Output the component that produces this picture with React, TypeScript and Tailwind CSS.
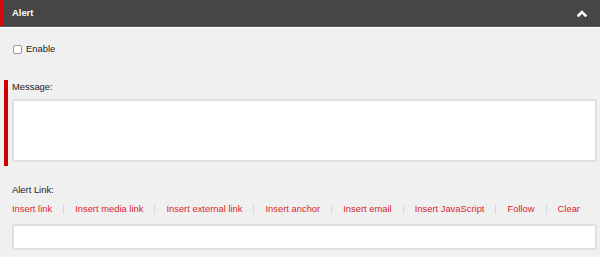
import React from "react";

const links = [
  "Insert link",
  "Insert media link",
  "Insert external link",
  "Insert anchor",
  "Insert email",
  "Insert JavaScript",
  "Follow",
  "Clear",
];

export default function App() {
  return (
    <div className="w-[600px] h-[257px] overflow-hidden bg-[#f0f0f0] font-['Liberation_Sans',Arial,sans-serif] text-[9.4px] text-[#222]">
      <div className="flex h-[26px] bg-[#464646]">
        <div className="w-[3px] bg-[#d10a0a]" />
        <div className="flex flex-1 items-center justify-between pl-[9px] pr-[13px]">
          <span className="font-bold text-white leading-[12px]">Alert</span>
          <svg width="10" height="8" viewBox="0 0 10 8" className="mb-[1px]">
            <polyline
              points="1.5,6.5 5,3 8.5,6.5"
              fill="none"
              stroke="#ffffff"
              strokeWidth="2.6"
              strokeLinecap="square"
            />
          </svg>
        </div>
      </div>
      <div className="h-px bg-[#5c5c5c]" />
      <div className="h-px bg-white" />

      <div className="mt-[16px] flex h-[10px] items-center pl-[13px]">
        <span className="h-[9px] w-[9px] rounded-[2px] border border-[#9a9a9a] bg-white" />
        <span className="ml-[4px] leading-[12px]">Enable</span>
      </div>

      <div className="mt-[26px] flex">
        <div className="ml-[4px] w-[4px] bg-[#cc0000]" />
        <div className="flex-1 pl-[4px] pr-[3px] pb-[4px]">
          <div className="mt-[1px] h-[12px] leading-[12px]">Message:</div>
          <div className="mt-[6px] h-[63px] rounded-[3px] border-2 border-[#e0e0e0] bg-white" />
        </div>
      </div>

      <div className="pl-[12px] pr-[3px]">
        <div className="mt-[18px] h-[12px] leading-[12px]">Alert Link:</div>
        <div className="mt-[7px] flex h-[12px] items-center leading-[12px] text-[#d9262e]">
          {links.map((l, i) => (
            <React.Fragment key={l}>
              {i > 0 && <span className="mx-[11px] h-[10px] w-px bg-[#d8d8d8]" />}
              <span>{l}</span>
            </React.Fragment>
          ))}
        </div>
        <div className="mt-[9px] h-[26px] rounded-[3px] border-2 border-[#e0e0e0] bg-white" />
      </div>
    </div>
  );
}
